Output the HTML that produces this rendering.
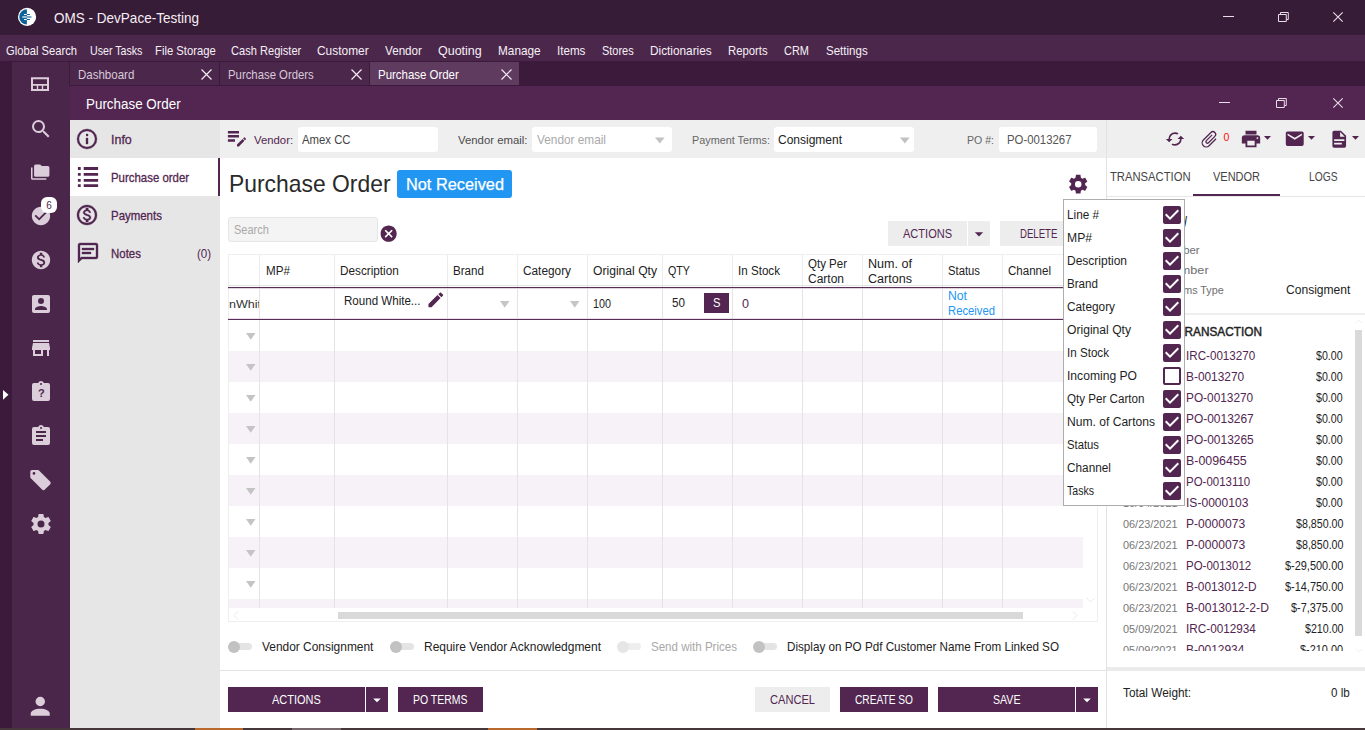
<!DOCTYPE html>
<html lang="en"><head><meta charset="utf-8"><title>OMS - DevPace-Testing</title><style>
*{box-sizing:border-box;margin:0;padding:0}
html,body{width:1365px;height:730px;overflow:hidden;background:#fff}
body{font-family:"Liberation Sans",sans-serif;font-size:13px;position:relative}
.b{position:absolute}
.i{position:absolute;display:block;overflow:visible}
.t{position:absolute;white-space:nowrap;display:block;transform-origin:0 50%}
.clip{position:absolute;overflow:hidden}
</style></head>
<body>
<div class="b" style="left:0px;top:0px;width:1365px;height:35px;background:#371c37;"></div>
<div class="b" style="left:0px;top:35px;width:1365px;height:26px;background:#4b274b;"></div>
<div class="b" style="left:0px;top:61px;width:1365px;height:25px;background:#3b1a3b;"></div>
<div class="b" style="left:0px;top:86px;width:12px;height:642px;background:#3b1a3b;"></div>
<div class="b" style="left:12px;top:62px;width:57px;height:24px;background:#4b264b;"></div>
<div class="b" style="left:12px;top:86px;width:58px;height:642px;background:#4b264b;"></div>
<svg class="i" style="left:17px;top:7px;width:20px;height:20px" viewBox="0 0 20 20"><circle cx="10.05" cy="9.9" r="9.1" fill="#fff"/><path d="M9.85,2.3A7.6,7.6 0 0,0 9.85,17.5Z" fill="#0b6399"/><path d="M6.97,6.9H9.85V7.95H6.97Z M6.97,12.05H9.85V13.1H6.97Z" fill="#fff"/><path d="M5.3,9.2H9.85V10.8H5.3Z" fill="#fff" opacity=".75"/><path d="M9.85,6.9H12.9V7.95H9.85Z M9.85,12.05H12.9V13.1H9.85Z" fill="#0b6399"/><path d="M9.85,9.2H14.4V10.8H9.85Z" fill="#0b6399" opacity=".7"/></svg>
<span class="t" style="left:54.2px;top:9px;font-size:14.5px;line-height:18px;color:#f4eef4;transform:scaleX(0.9323);">OMS - DevPace-Testing</span>
<div class="b" style="left:1223px;top:16.1px;width:10.5px;height:1.1px;background:#e8dde8;"></div><svg class="i" style="left:1278px;top:12px;width:11px;height:10px" viewBox="0 0 11 10"><path d="M0.5,2.5H8.3V9.5H0.5Z M2.5,2.5V0.5H10.3V7.5H8.3" fill="none" stroke="#e8dde8" stroke-width="1"/></svg><svg class="i" style="left:1333.4px;top:12px;width:10px;height:10px" viewBox="0 0 10 10"><path d="M0.3,0.3L9.7,9.7M9.7,0.3L0.3,9.7" fill="none" stroke="#e8dde8" stroke-width="1.1"/></svg>
<span class="t" style="left:6.3px;top:43px;font-size:12.7px;line-height:16px;color:#f6f0f6;transform:scaleX(0.883);">Global Search</span>
<span class="t" style="left:90.3px;top:43px;font-size:12.7px;line-height:16px;color:#f6f0f6;transform:scaleX(0.8382);">User Tasks</span>
<span class="t" style="left:155.3px;top:43px;font-size:12.7px;line-height:16px;color:#f6f0f6;transform:scaleX(0.8873);">File Storage</span>
<span class="t" style="left:230.7px;top:43px;font-size:12.7px;line-height:16px;color:#f6f0f6;transform:scaleX(0.8745);">Cash Register</span>
<span class="t" style="left:317.3px;top:43px;font-size:12.7px;line-height:16px;color:#f6f0f6;transform:scaleX(0.94);">Customer</span>
<span class="t" style="left:385px;top:43px;font-size:12.7px;line-height:16px;color:#f6f0f6;transform:scaleX(0.92);">Vendor</span>
<span class="t" style="left:438px;top:43px;font-size:12.7px;line-height:16px;color:#f6f0f6;transform:scaleX(0.9834);">Quoting</span>
<span class="t" style="left:498.3px;top:43px;font-size:12.7px;line-height:16px;color:#f6f0f6;transform:scaleX(0.9311);">Manage</span>
<span class="t" style="left:557.3px;top:43px;font-size:12.7px;line-height:16px;color:#f6f0f6;transform:scaleX(0.9152);">Items</span>
<span class="t" style="left:602px;top:43px;font-size:12.7px;line-height:16px;color:#f6f0f6;transform:scaleX(0.8644);">Stores</span>
<span class="t" style="left:650.3px;top:43px;font-size:12.7px;line-height:16px;color:#f6f0f6;transform:scaleX(0.9309);">Dictionaries</span>
<span class="t" style="left:728.3px;top:43px;font-size:12.7px;line-height:16px;color:#f6f0f6;transform:scaleX(0.8934);">Reports</span>
<span class="t" style="left:784.3px;top:43px;font-size:12.7px;line-height:16px;color:#f6f0f6;transform:scaleX(0.8649);">CRM</span>
<span class="t" style="left:826px;top:43px;font-size:12.7px;line-height:16px;color:#f6f0f6;transform:scaleX(0.9096);">Settings</span>
<div class="b" style="left:70px;top:62px;width:149px;height:23px;background:#4b274b;"></div><span class="t" style="left:78.2px;top:67px;font-size:12.7px;line-height:16px;color:#d9c9d9;transform:scaleX(0.9069);">Dashboard</span><svg class="i" style="left:201.4px;top:68.5px;width:11px;height:11px" viewBox="0 0 11 11"><path d="M0.5,0.5L10.5,10.5M10.5,0.5L0.5,10.5" fill="none" stroke="#f3ecf3" stroke-width="1.2"/></svg>
<div class="b" style="left:220px;top:62px;width:149px;height:23px;background:#4b274b;"></div><span class="t" style="left:228.2px;top:67px;font-size:12.7px;line-height:16px;color:#d9c9d9;transform:scaleX(0.8946);">Purchase Orders</span><svg class="i" style="left:351.4px;top:68.5px;width:11px;height:11px" viewBox="0 0 11 11"><path d="M0.5,0.5L10.5,10.5M10.5,0.5L0.5,10.5" fill="none" stroke="#f3ecf3" stroke-width="1.2"/></svg>
<div class="b" style="left:370px;top:62px;width:149px;height:23px;background:#5f3b5f;"></div><span class="t" style="left:378.2px;top:67px;font-size:12.7px;line-height:16px;color:#fff;transform:scaleX(0.9022);">Purchase Order</span><svg class="i" style="left:501.4px;top:68.5px;width:11px;height:11px" viewBox="0 0 11 11"><path d="M0.5,0.5L10.5,10.5M10.5,0.5L0.5,10.5" fill="none" stroke="#f3ecf3" stroke-width="1.2"/></svg>
<svg class="i" style="left:28.1px;top:72px;width:24px;height:24px" viewBox="0 0 24 24"><path fill="#dccdda" fill-rule="evenodd" d="M3,5.3H21V19H3Z M5,7.3V12H19V7.3Z M5,13.8V17H8.8V13.8Z M10.2,13.8V17H13.8V13.8Z M15.2,13.8V17H19V13.8Z"/></svg>
<svg class="i" style="left:28.6px;top:116.7px;width:24px;height:24px;" viewBox="0 0 24 24"><path fill="#dccdda" d="M9.5,3A6.5,6.5 0 0,1 16,9.5C16,11.11 15.41,12.59 14.44,13.73L14.71,14H15.5L20.5,19L19,20.5L14,15.5V14.71L13.73,14.44C12.59,15.41 11.11,16 9.5,16A6.5,6.5 0 0,1 3,9.5A6.5,6.5 0 0,1 9.5,3M9.5,5C7,5 5,7 5,9.5C5,12 7,14 9.5,14C12,14 14,12 14,9.5C14,7 12,5 9.5,5Z"/></svg>
<svg class="i" style="left:31.3px;top:163.4px;width:18.4px;height:18.4px;" viewBox="0 0 24 24"><path fill="#dccdda" d="M22,4H14L12,2H6A2,2 0 0,0 4,4V16A2,2 0 0,0 6,18H22A2,2 0 0,0 24,16V6A2,2 0 0,0 22,4M2,6H0V11H0V20A2,2 0 0,0 2,22H20V20H2V6Z"/></svg>
<svg class="i" style="left:29.6px;top:205.3px;width:22px;height:22px;" viewBox="0 0 24 24"><path fill="#dccdda" d="M12 2C6.5 2 2 6.5 2 12S6.5 22 12 22 22 17.5 22 12 17.5 2 12 2M10 17L5 12L6.41 10.59L10 14.17L17.59 6.58L19 8L10 17Z"/></svg>
<div class="b" style="left:41px;top:197px;width:16px;height:16px;background:#fff;border-radius:6px;"></div>
<span class="t" style="left:46.2px;top:200px;font-size:10px;line-height:12px;color:#4b264b;">6</span>
<svg class="i" style="left:29.8px;top:248.5px;width:22px;height:22px;" viewBox="0 0 24 24"><path fill="#dccdda" d="M12 2C6.48 2 2 6.48 2 12s4.48 10 10 10 10-4.48 10-10S17.52 2 12 2zm1.41 16.09V20h-2.67v-1.93c-1.71-.36-3.16-1.46-3.27-3.4h1.96c.1 1.05.82 1.87 2.65 1.87 1.96 0 2.4-.98 2.4-1.59 0-.83-.44-1.61-2.67-2.14-2.48-.6-4.18-1.62-4.18-3.67 0-1.72 1.39-2.84 3.11-3.21V4h2.67v1.95c1.86.45 2.79 1.86 2.85 3.39H14.3c-.05-1.11-.64-1.87-2.22-1.87-1.5 0-2.4.68-2.4 1.64 0 .84.65 1.39 2.67 1.91s4.18 1.39 4.18 3.91c-.01 1.83-1.38 2.83-3.12 3.16z"/></svg>
<svg class="i" style="left:28.6px;top:292px;width:24px;height:24px;" viewBox="0 0 24 24"><path fill="#dccdda" d="M6,17C6,15 10,13.9 12,13.9C14,13.9 18,15 18,17V18H6M15,9A3,3 0 0,1 12,12A3,3 0 0,1 9,9A3,3 0 0,1 12,6A3,3 0 0,1 15,9M3,5V19A2,2 0 0,0 5,21H19A2,2 0 0,0 21,19V5A2,2 0 0,0 19,3H5C3.89,3 3,3.9 3,5Z"/></svg>
<svg class="i" style="left:28.6px;top:336px;width:24px;height:24px;" viewBox="0 0 24 24"><path fill="#dccdda" d="M12,18H6V14H12M21,14V12L20,7H4L3,12V14H4V20H14V14H18V20H20V14M20,4H4V6H20V4Z"/></svg>
<svg class="i" style="left:28.6px;top:380px;width:24px;height:24px;" viewBox="0 0 24 24"><path fill="#dccdda" d="M19,3H14.82C14.4,1.84 13.3,1 12,1C10.7,1 9.6,1.84 9.18,3H5A2,2 0 0,0 3,5V19A2,2 0 0,0 5,21H19A2,2 0 0,0 21,19V5A2,2 0 0,0 19,3M12,3A1,1 0 0,1 13,4A1,1 0 0,1 12,5A1,1 0 0,1 11,4A1,1 0 0,1 12,3Z"/></svg>
<span class="t" style="left:37.9px;top:386px;font-size:11px;line-height:14px;color:#4b264b;font-weight:700;">?</span>
<svg class="i" style="left:28.6px;top:424px;width:24px;height:24px;" viewBox="0 0 24 24"><path fill="#dccdda" d="M17,9H7V7H17M17,13H7V11H17M14,17H7V15H14M12,3A1,1 0 0,1 13,4A1,1 0 0,1 12,5A1,1 0 0,1 11,4A1,1 0 0,1 12,3M19,3H14.82C14.4,1.84 13.3,1 12,1C10.7,1 9.6,1.84 9.18,3H5A2,2 0 0,0 3,5V19A2,2 0 0,0 5,21H19A2,2 0 0,0 21,19V5A2,2 0 0,0 19,3Z"/></svg>
<svg class="i" style="left:28px;top:468px;width:24px;height:24px" viewBox="0 0 24 24"><path fill="#dccdda" fill-rule="evenodd" d="M3.9,2.1H10Q10.6,2.1 11,2.5L22.3,13.7Q23.2,15 22.3,16.2L16.3,22Q15.3,22.6 14.3,21.8L2.8,10.2Q2.3,9.7 2.3,9V3.8Q2.3,2.1 3.9,2.1Z M7.35,5.42A1.38,1.38 0 1,0 4.59,5.42A1.38,1.38 0 1,0 7.35,5.42Z"/></svg>
<svg class="i" style="left:28.6px;top:512px;width:24px;height:24px;" viewBox="0 0 24 24"><path fill="#dccdda" d="M12,15.5A3.5,3.5 0 0,1 8.5,12A3.5,3.5 0 0,1 12,8.5A3.5,3.5 0 0,1 15.5,12A3.5,3.5 0 0,1 12,15.5M19.43,12.97C19.47,12.65 19.5,12.33 19.5,12C19.5,11.67 19.47,11.34 19.43,11L21.54,9.37C21.73,9.22 21.78,8.95 21.66,8.73L19.66,5.27C19.54,5.05 19.27,4.96 19.05,5.05L16.56,6.05C16.04,5.66 15.5,5.32 14.87,5.07L14.5,2.42C14.46,2.18 14.25,2 14,2H10C9.75,2 9.54,2.18 9.5,2.42L9.13,5.07C8.5,5.32 7.96,5.66 7.44,6.05L4.95,5.05C4.73,4.96 4.46,5.05 4.34,5.27L2.34,8.73C2.21,8.95 2.27,9.22 2.46,9.37L4.57,11C4.53,11.34 4.5,11.67 4.5,12C4.5,12.33 4.53,12.65 4.57,12.97L2.46,14.63C2.27,14.78 2.21,15.05 2.34,15.27L4.34,18.73C4.46,18.95 4.73,19.03 4.95,18.95L7.44,17.94C7.96,18.34 8.5,18.68 9.13,18.93L9.5,21.58C9.54,21.82 9.75,22 10,22H14C14.25,22 14.46,21.82 14.5,21.58L14.87,18.93C15.5,18.67 16.04,18.34 16.56,17.94L19.05,18.95C19.27,19.03 19.54,18.95 19.66,18.73L21.66,15.27C21.78,15.05 21.73,14.78 21.54,14.63L19.43,12.97Z"/></svg>
<svg class="i" style="left:26.25px;top:691.65px;width:28.5px;height:28.5px;" viewBox="0 0 24 24"><path fill="#dccdda" d="M12,4A4,4 0 0,1 16,8A4,4 0 0,1 12,12A4,4 0 0,1 8,8A4,4 0 0,1 12,4M12,14C16.42,14 20,15.79 20,18V20H4V18C4,15.79 7.58,14 12,14Z"/></svg>
<svg class="i" style="left:2.8px;top:389.7px;width:5.5px;height:9.7px" viewBox="0 0 6 11" preserveAspectRatio="none"><path d="M0,0L6,5.5L0,11Z" fill="#fff"/></svg>
<div class="b" style="left:70px;top:86px;width:1295px;height:34px;background:#522651;"></div>
<span class="t" style="left:86.4px;top:95px;font-size:14px;line-height:18px;color:#fff;transform:scaleX(0.9572);">Purchase Order</span>
<div class="b" style="left:1219px;top:102.1px;width:10.5px;height:1.1px;background:#e8dde8;"></div><svg class="i" style="left:1276px;top:98px;width:11px;height:10px" viewBox="0 0 11 10"><path d="M0.5,2.5H8.3V9.5H0.5Z M2.5,2.5V0.5H10.3V7.5H8.3" fill="none" stroke="#e8dde8" stroke-width="1"/></svg><svg class="i" style="left:1333.4px;top:98px;width:10px;height:10px" viewBox="0 0 10 10"><path d="M0.3,0.3L9.7,9.7M9.7,0.3L0.3,9.7" fill="none" stroke="#e8dde8" stroke-width="1.1"/></svg>
<div class="b" style="left:70px;top:120px;width:150px;height:608px;background:#e6e6e6;"></div>
<div class="b" style="left:70px;top:158px;width:150px;height:38px;background:#fff;"></div>
<div class="b" style="left:218px;top:158px;width:2px;height:38px;background:#522651;"></div>
<svg class="i" style="left:75.3px;top:126.8px;width:24px;height:24px;stroke:#522651;stroke-width:0.35px;" viewBox="0 0 24 24"><path fill="#522651" d="M11,9H13V7H11M12,20C7.59,20 4,16.41 4,12C4,7.59 7.59,4 12,4C16.41,4 20,7.59 20,12C20,16.41 16.41,20 12,20M12,2A10,10 0 0,0 2,12A10,10 0 0,0 12,22A10,10 0 0,0 22,12A10,10 0 0,0 12,2M11,17H13V11H11V17Z"/></svg>
<span class="t" style="left:110.8px;top:132px;font-size:12.6px;line-height:16px;color:#522651;transform:scaleX(0.9897);-webkit-text-stroke:0.3px #522651">Info</span>
<svg class="i" style="left:75.5px;top:165px;width:24px;height:24px" viewBox="0 0 24 24"><path fill="#522651" d="M1.9,2.1H4.7V5H1.9Z M7.7,2.1H22.1V5H7.7Z M1.9,8H4.7V10.8H1.9Z M7.7,8H22.1V10.8H7.7Z M1.9,13.9H4.7V16.7H1.9Z M7.7,13.9H22.1V16.7H7.7Z M1.9,19.3H4.7V22.1H1.9Z M7.7,19.3H22.1V22.1H7.7Z"/></svg>
<span class="t" style="left:110.8px;top:170px;font-size:12.6px;line-height:16px;color:#522651;transform:scaleX(0.907);-webkit-text-stroke:0.3px #522651">Purchase order</span>
<svg class="i" style="left:75.3px;top:202.5px;width:24px;height:24px;stroke:#522651;stroke-width:0.35px;" viewBox="0 0 24 24"><path fill="#522651" d="M12 2C6.48 2 2 6.48 2 12s4.48 10 10 10 10-4.48 10-10S17.52 2 12 2zm0 18c-4.41 0-8-3.59-8-8s3.59-8 8-8 8 3.59 8 8-3.59 8-8 8zm.31-8.86c-1.77-.45-2.34-.94-2.34-1.67 0-.84.79-1.43 2.1-1.43 1.38 0 1.9.66 1.94 1.64h1.71c-.05-1.34-.87-2.57-2.49-2.97V5H10.9v1.69c-1.51.32-2.72 1.3-2.72 2.81 0 1.79 1.49 2.69 3.66 3.21 1.95.46 2.34 1.15 2.34 1.87 0 .53-.39 1.39-2.1 1.39-1.6 0-2.23-.72-2.32-1.64H8.04c.1 1.7 1.36 2.66 2.86 2.97V19h2.34v-1.67c1.52-.29 2.72-1.16 2.73-2.77-.01-2.2-1.9-2.96-3.66-3.42z"/></svg>
<span class="t" style="left:110.8px;top:208px;font-size:12.6px;line-height:16px;color:#522651;transform:scaleX(0.9089);-webkit-text-stroke:0.3px #522651">Payments</span>
<svg class="i" style="left:75.5px;top:240.7px;width:24px;height:24px;stroke:#522651;stroke-width:0.35px;" viewBox="0 0 24 24"><path fill="#522651" d="M20,2A2,2 0 0,1 22,4V16A2,2 0 0,1 20,18H6L2,22V4C2,2.89 2.9,2 4,2H20M4,4V17.17L5.17,16H20V4H4M6,7H18V9H6V7M6,11H15V13H6V11Z"/></svg>
<span class="t" style="left:110.8px;top:246px;font-size:12.6px;line-height:16px;color:#522651;transform:scaleX(0.9086);-webkit-text-stroke:0.3px #522651">Notes</span>
<span class="t" style="left:197.4px;top:246px;font-size:12.6px;line-height:16px;color:#522651;transform:scaleX(0.9217);">(0)</span>
<div class="b" style="left:220px;top:120px;width:1145px;height:38px;background:#efefef;"></div>
<div class="b" style="left:1106px;top:120px;width:1px;height:608px;background:#e2e2e2;"></div>
<svg class="i" style="left:226px;top:129px;width:24px;height:24px" viewBox="0 0 24 24"><path fill="#522651" d="M1.9,2.1H13V4.5H1.9Z M1.9,6.1H13V8.5H1.9Z M1.9,10.3H9V12.7H1.9Z"/><path fill="#522651" transform="translate(-0.04,-1.02) scale(0.92)" d="M20.04,10.13C19.9,10.13 19.76,10.19 19.65,10.3L18.65,11.3L20.7,13.35L21.7,12.35C21.92,12.14 21.92,11.79 21.7,11.58L20.42,10.3C20.31,10.19 20.18,10.13 20.04,10.13M18.07,11.88L12,17.94V20H14.06L20.12,13.93L18.07,11.88"/></svg>
<span class="t" style="left:254.2px;top:132px;font-size:11.7px;line-height:15px;color:#522651;transform:scaleX(0.9703);">Vendor:</span>
<div class="b" style="left:298px;top:126.5px;width:140px;height:25px;background:#fff;border-radius:3px;"></div>
<span class="t" style="left:302px;top:132px;font-size:12.7px;line-height:16px;color:#444;transform:scaleX(0.8935);">Amex CC</span>
<span class="t" style="left:458px;top:132px;font-size:11.7px;line-height:15px;color:#4a4a4a;transform:scaleX(0.9725);">Vendor email:</span>
<div class="b" style="left:532px;top:126.5px;width:140px;height:25px;background:#fff;border-radius:3px;"></div>
<span class="t" style="left:537px;top:132px;font-size:12.7px;line-height:16px;color:#a9a9a9;transform:scaleX(0.9316);">Vendor email</span>
<svg class="i" style="left:654.6px;top:136.7px;width:9.6px;height:7px" viewBox="0 0 11 7"><path d="M0,0H11L5.5,7Z" fill="#c2c2c2"/></svg>
<span class="t" style="left:692px;top:132px;font-size:11.7px;line-height:15px;color:#666;transform:scaleX(0.926);">Payment Terms:</span>
<div class="b" style="left:774px;top:126.5px;width:140px;height:25px;background:#fff;border-radius:3px;"></div>
<span class="t" style="left:778px;top:132px;font-size:12.7px;line-height:16px;color:#222;transform:scaleX(0.9453);">Consigment</span>
<svg class="i" style="left:900.3px;top:136.7px;width:9.6px;height:7px" viewBox="0 0 11 7"><path d="M0,0H11L5.5,7Z" fill="#c2c2c2"/></svg>
<span class="t" style="left:966.5px;top:132px;font-size:11.7px;line-height:15px;color:#666;transform:scaleX(0.9033);">PO #:</span>
<div class="b" style="left:999px;top:126.5px;width:98px;height:25px;background:#fff;border-radius:3px;"></div>
<span class="t" style="left:1006.5px;top:132px;font-size:12.7px;line-height:16px;color:#555;transform:scaleX(0.8964);">PO-0013267</span>
<svg class="i" style="left:1164.9px;top:128.8px;width:20px;height:20px;" viewBox="0 0 24 24"><path fill="#522651" d="M19,8L15,12H18A6,6 0 0,1 12,18C11,18 10.03,17.75 9.2,17.3L7.74,18.76C8.97,19.54 10.43,20 12,20A8,8 0 0,0 20,12H23M6,12A6,6 0 0,1 12,6C13,6 13.97,6.25 14.8,6.7L16.26,5.24C15.03,4.46 13.57,4 12,4A8,8 0 0,0 4,12H1L5,16L9,12"/></svg>
<svg class="i" style="left:1198.75px;top:128.6px;width:20.5px;height:20.5px;transform:rotate(45deg)" viewBox="0 0 24 24"><path fill="#522651" d="M16.5,6V17.5A4,4 0 0,1 12.5,21.5A4,4 0 0,1 8.5,17.5V5A2.5,2.5 0 0,1 11,2.5A2.5,2.5 0 0,1 13.5,5V15.5A1,1 0 0,1 12.5,16.5A1,1 0 0,1 11.5,15.5V6H10V15.5A2.5,2.5 0 0,0 12.5,18A2.5,2.5 0 0,0 15,15.5V5A4,4 0 0,0 11,1A4,4 0 0,0 7,5V17.5A5.5,5.5 0 0,0 12.5,23A5.5,5.5 0 0,0 18,17.5V6H16.5Z"/></svg>
<span class="t" style="left:1223.5px;top:131px;font-size:10.5px;line-height:13px;color:#ff0d0d;">0</span>
<svg class="i" style="left:1239.9px;top:127.8px;width:22px;height:22px;" viewBox="0 0 24 24"><path fill="#522651" d="M18,3H6V7H18M19,12A1,1 0 0,1 18,11A1,1 0 0,1 19,10A1,1 0 0,1 20,11A1,1 0 0,1 19,12M16,19H8V14H16M19,8H5A3,3 0 0,0 2,11V17H6V21H18V17H22V11A3,3 0 0,0 19,8Z"/></svg>
<svg class="i" style="left:1259.4px;top:129.45px;width:17px;height:17px;" viewBox="0 0 24 24"><path fill="#522651" d="M7,10L12,15L17,10H7Z"/></svg>
<svg class="i" style="left:1284.15px;top:128.35px;width:21.5px;height:21.5px;" viewBox="0 0 24 24"><path fill="#522651" d="M20,8L12,13L4,8V6L12,11L20,6M20,4H4C2.89,4 2,4.89 2,6V18A2,2 0 0,0 4,20H20A2,2 0 0,0 22,18V6C22,4.89 21.1,4 20,4Z"/></svg>
<svg class="i" style="left:1303.4px;top:129.45px;width:17px;height:17px;" viewBox="0 0 24 24"><path fill="#522651" d="M7,10L12,15L17,10H7Z"/></svg>
<svg class="i" style="left:1328.95px;top:129px;width:20.5px;height:20.5px;" viewBox="0 0 24 24"><path fill="#522651" d="M13,9H18.5L13,3.5V9M6,2H14L20,8V20A2,2 0 0,1 18,22H6C4.89,22 4,21.1 4,20V4C4,2.89 4.89,2 6,2M15,18V16H6V18H15M18,14V12H6V14H18Z"/></svg>
<svg class="i" style="left:1347.3px;top:129.45px;width:17px;height:17px;" viewBox="0 0 24 24"><path fill="#522651" d="M7,10L12,15L17,10H7Z"/></svg>
<span class="t" style="left:228.8px;top:170px;font-size:23.2px;line-height:29px;color:#2a2a2a;transform:scaleX(0.9867);">Purchase Order</span>
<div class="b" style="left:397px;top:169.5px;width:114.8px;height:28px;background:#2196f3;border-radius:3px;"></div>
<span class="t" style="left:405.7px;top:175px;font-size:15.8px;line-height:20px;color:#fff;transform:scaleX(1.0334);-webkit-text-stroke:0.25px #fff">Not Received</span>
<svg class="i" style="left:1066.9px;top:172.7px;width:22.4px;height:22.4px;" viewBox="0 0 24 24"><path fill="#522651" d="M12,15.5A3.5,3.5 0 0,1 8.5,12A3.5,3.5 0 0,1 12,8.5A3.5,3.5 0 0,1 15.5,12A3.5,3.5 0 0,1 12,15.5M19.43,12.97C19.47,12.65 19.5,12.33 19.5,12C19.5,11.67 19.47,11.34 19.43,11L21.54,9.37C21.73,9.22 21.78,8.95 21.66,8.73L19.66,5.27C19.54,5.05 19.27,4.96 19.05,5.05L16.56,6.05C16.04,5.66 15.5,5.32 14.87,5.07L14.5,2.42C14.46,2.18 14.25,2 14,2H10C9.75,2 9.54,2.18 9.5,2.42L9.13,5.07C8.5,5.32 7.96,5.66 7.44,6.05L4.95,5.05C4.73,4.96 4.46,5.05 4.34,5.27L2.34,8.73C2.21,8.95 2.27,9.22 2.46,9.37L4.57,11C4.53,11.34 4.5,11.67 4.5,12C4.5,12.33 4.53,12.65 4.57,12.97L2.46,14.63C2.27,14.78 2.21,15.05 2.34,15.27L4.34,18.73C4.46,18.95 4.73,19.03 4.95,18.95L7.44,17.94C7.96,18.34 8.5,18.68 9.13,18.93L9.5,21.58C9.54,21.82 9.75,22 10,22H14C14.25,22 14.46,21.82 14.5,21.58L14.87,18.93C15.5,18.67 16.04,18.34 16.56,17.94L19.05,18.95C19.27,19.03 19.54,18.95 19.66,18.73L21.66,15.27C21.78,15.05 21.73,14.78 21.54,14.63L19.43,12.97Z"/></svg>
<div class="b" style="left:228px;top:217px;width:150px;height:25px;background:#f4f4f4;border:1px solid #e6e6e6;border-radius:3px;"></div>
<span class="t" style="left:234.2px;top:223px;font-size:12.3px;line-height:15px;color:#a9a9a9;transform:scaleX(0.893);">Search</span>
<svg class="i" style="left:379.4px;top:224px;width:19.3px;height:19.3px;" viewBox="0 0 24 24"><path fill="#522651" d="M12,2C17.53,2 22,6.47 22,12C22,17.53 17.53,22 12,22C6.47,22 2,17.53 2,12C2,6.47 6.47,2 12,2M15.59,7L12,10.59L8.41,7L7,8.41L10.59,12L7,15.59L8.41,17L12,13.41L15.59,17L17,15.59L13.41,12L17,8.41L15.59,7Z"/></svg>
<div class="b" style="left:888px;top:221px;width:79px;height:25px;background:#ededed;"></div>
<span class="t" style="left:903px;top:227px;font-size:12px;line-height:15px;color:#522651;transform:scaleX(0.9204);">ACTIONS</span>
<div class="b" style="left:968px;top:221px;width:22px;height:25px;background:#ededed;"></div>
<svg class="i" style="left:969px;top:223.5px;width:20px;height:20px;" viewBox="0 0 24 24"><path fill="#522651" d="M7,10L12,15L17,10H7Z"/></svg>
<div class="b" style="left:1000px;top:221px;width:80px;height:25px;background:#ededed;"></div>
<span class="t" style="left:1019.6px;top:227px;font-size:12px;line-height:15px;color:#522651;transform:scaleX(0.8011);">DELETE</span>
<div class="b" style="left:228px;top:254px;width:870px;height:368px;background:#fff;border:1px solid #eeeeee;"></div>
<div class="clip" style="left:229px;top:255px;width:854px;height:353px">
<div class="b" style="left:0px;top:96px;width:854px;height:31px;background:#f7f2f7;"></div>
<div class="b" style="left:0px;top:158px;width:854px;height:31px;background:#f7f2f7;"></div>
<div class="b" style="left:0px;top:220px;width:854px;height:31px;background:#f7f2f7;"></div>
<div class="b" style="left:0px;top:282px;width:854px;height:31px;background:#f7f2f7;"></div>
<div class="b" style="left:0px;top:344px;width:854px;height:31px;background:#f7f2f7;"></div>
<div class="b" style="left:30px;top:0px;width:1px;height:353px;background:#e6e2e6;"></div>
<div class="b" style="left:105px;top:0px;width:1px;height:353px;background:#e6e2e6;"></div>
<div class="b" style="left:218px;top:0px;width:1px;height:353px;background:#e6e2e6;"></div>
<div class="b" style="left:288px;top:0px;width:1px;height:353px;background:#e6e2e6;"></div>
<div class="b" style="left:358px;top:0px;width:1px;height:353px;background:#e6e2e6;"></div>
<div class="b" style="left:433px;top:0px;width:1px;height:353px;background:#e6e2e6;"></div>
<div class="b" style="left:503px;top:0px;width:1px;height:353px;background:#e6e2e6;"></div>
<div class="b" style="left:573px;top:0px;width:1px;height:353px;background:#e6e2e6;"></div>
<div class="b" style="left:633px;top:0px;width:1px;height:353px;background:#e6e2e6;"></div>
<div class="b" style="left:713px;top:0px;width:1px;height:353px;background:#e6e2e6;"></div>
<div class="b" style="left:773px;top:0px;width:1px;height:353px;background:#e6e2e6;"></div>
</div>
<div class="b" style="left:229px;top:255px;width:854px;height:30px;background:#fff;"></div>
<div class="b" style="left:259px;top:255px;width:1px;height:31px;background:#ececec;"></div>
<div class="b" style="left:334px;top:255px;width:1px;height:31px;background:#ececec;"></div>
<div class="b" style="left:447px;top:255px;width:1px;height:31px;background:#ececec;"></div>
<div class="b" style="left:517px;top:255px;width:1px;height:31px;background:#ececec;"></div>
<div class="b" style="left:587px;top:255px;width:1px;height:31px;background:#ececec;"></div>
<div class="b" style="left:662px;top:255px;width:1px;height:31px;background:#ececec;"></div>
<div class="b" style="left:732px;top:255px;width:1px;height:31px;background:#ececec;"></div>
<div class="b" style="left:802px;top:255px;width:1px;height:31px;background:#ececec;"></div>
<div class="b" style="left:862px;top:255px;width:1px;height:31px;background:#ececec;"></div>
<div class="b" style="left:942px;top:255px;width:1px;height:31px;background:#ececec;"></div>
<div class="b" style="left:1002px;top:255px;width:1px;height:31px;background:#ececec;"></div>
<div class="b" style="left:229px;top:285px;width:854px;height:1px;background:#e4e4e4;"></div>
<div class="b" style="left:229px;top:288px;width:854px;height:31px;background:#fff;"></div>
<div class="b" style="left:228px;top:287px;width:855px;height:1px;background:#5a2d59;"></div>
<div class="b" style="left:228px;top:288px;width:855px;height:1px;background:#5a2d59;opacity:.2;"></div>
<div class="b" style="left:228px;top:319px;width:855px;height:1px;background:#5a2d59;"></div>
<div class="b" style="left:228px;top:318px;width:855px;height:1px;background:#5a2d59;opacity:.15;"></div>
<div class="b" style="left:259px;top:289px;width:1px;height:29px;background:#e6e2e6;"></div>
<div class="b" style="left:334px;top:289px;width:1px;height:29px;background:#e6e2e6;"></div>
<div class="b" style="left:447px;top:289px;width:1px;height:29px;background:#e6e2e6;"></div>
<div class="b" style="left:517px;top:289px;width:1px;height:29px;background:#e6e2e6;"></div>
<div class="b" style="left:587px;top:289px;width:1px;height:29px;background:#e6e2e6;"></div>
<div class="b" style="left:662px;top:289px;width:1px;height:29px;background:#e6e2e6;"></div>
<div class="b" style="left:732px;top:289px;width:1px;height:29px;background:#e6e2e6;"></div>
<div class="b" style="left:802px;top:289px;width:1px;height:29px;background:#e6e2e6;"></div>
<div class="b" style="left:862px;top:289px;width:1px;height:29px;background:#e6e2e6;"></div>
<div class="b" style="left:942px;top:289px;width:1px;height:29px;background:#e6e2e6;"></div>
<div class="b" style="left:1002px;top:289px;width:1px;height:29px;background:#e6e2e6;"></div>
<span class="t" style="left:265.8px;top:264px;font-size:12px;line-height:15px;color:#222;transform:scaleX(0.9681);">MP#</span>
<span class="t" style="left:340.2px;top:264px;font-size:12px;line-height:15px;color:#222;transform:scaleX(0.9795);">Description</span>
<span class="t" style="left:453px;top:264px;font-size:12px;line-height:15px;color:#222;transform:scaleX(0.9678);">Brand</span>
<span class="t" style="left:523px;top:264px;font-size:12px;line-height:15px;color:#222;transform:scaleX(0.9856);">Category</span>
<span class="t" style="left:593px;top:264px;font-size:12px;line-height:15px;color:#222;transform:scaleX(1.0101);">Original Qty</span>
<span class="t" style="left:668px;top:264px;font-size:12px;line-height:15px;color:#222;transform:scaleX(0.8917);">QTY</span>
<span class="t" style="left:738px;top:264px;font-size:12px;line-height:15px;color:#222;transform:scaleX(0.9686);">In Stock</span>
<span class="t" style="left:808px;top:257px;font-size:12px;line-height:15px;color:#222;transform:scaleX(0.9585);">Qty Per</span>
<span class="t" style="left:808px;top:272px;font-size:12px;line-height:15px;color:#222;">Carton</span>
<span class="t" style="left:868px;top:257px;font-size:12px;line-height:15px;color:#222;transform:scaleX(1.0472);">Num. of</span>
<span class="t" style="left:868px;top:272px;font-size:12px;line-height:15px;color:#222;transform:scaleX(1.0468);">Cartons</span>
<span class="t" style="left:948px;top:264px;font-size:12px;line-height:15px;color:#222;transform:scaleX(0.9403);">Status</span>
<span class="t" style="left:1008px;top:264px;font-size:12px;line-height:15px;color:#222;transform:scaleX(0.9619);">Channel</span>
<div class="clip" style="left:229px;top:289px;width:30px;height:29px">
<span class="t" style="left:0.4px;top:8px;font-size:11px;line-height:14px;color:#333;transform:scaleX(1.1413);">nWhit</span>
</div>
<span class="t" style="left:343.7px;top:294px;font-size:12.2px;line-height:15px;color:#222;transform:scaleX(0.9488);">Round White...</span>
<svg class="i" style="left:425.6px;top:290px;width:19.6px;height:19.6px;" viewBox="0 0 24 24"><path fill="#522651" d="M20.71,7.04C21.1,6.65 21.1,6 20.71,5.63L18.37,3.29C18,2.9 17.35,2.9 16.96,3.29L15.12,5.12L18.87,8.87M3,17.25V21H6.75L17.81,9.93L14.06,6.18L3,17.25Z"/></svg>
<svg class="i" style="left:499.9px;top:300.9px;width:9.5px;height:6.8px" viewBox="0 0 10 7" preserveAspectRatio="none"><path d="M0,0H10L5,7Z" fill="#c6c6c6"/></svg>
<svg class="i" style="left:569.9px;top:300.9px;width:9.5px;height:6.8px" viewBox="0 0 10 7" preserveAspectRatio="none"><path d="M0,0H10L5,7Z" fill="#c6c6c6"/></svg>
<span class="t" style="left:593px;top:297px;font-size:12px;line-height:15px;color:#222;transform:scaleX(0.8986);">100</span>
<span class="t" style="left:672px;top:296px;font-size:12px;line-height:15px;color:#222;transform:scaleX(0.9731);">50</span>
<div class="b" style="left:704px;top:293px;width:24.5px;height:20px;background:#522651;"></div>
<span class="t" style="left:712.5px;top:296px;font-size:12.2px;line-height:15px;color:#fff;transform:scaleX(0.9213);">S</span>
<span class="t" style="left:742px;top:297px;font-size:12px;line-height:15px;color:#522651;transform:scaleX(1.0467);">0</span>
<span class="t" style="left:948px;top:289px;font-size:12px;line-height:15px;color:#2196f3;transform:scaleX(1.0167);">Not</span>
<span class="t" style="left:948px;top:304px;font-size:12px;line-height:15px;color:#2196f3;transform:scaleX(0.9394);">Received</span>
<svg class="i" style="left:245.7px;top:332.9px;width:9.5px;height:6.8px" viewBox="0 0 10 7" preserveAspectRatio="none"><path d="M0,0H10L5,7Z" fill="#c4c4c4"/></svg>
<svg class="i" style="left:245.7px;top:363.9px;width:9.5px;height:6.8px" viewBox="0 0 10 7" preserveAspectRatio="none"><path d="M0,0H10L5,7Z" fill="#c4c4c4"/></svg>
<svg class="i" style="left:245.7px;top:394.9px;width:9.5px;height:6.8px" viewBox="0 0 10 7" preserveAspectRatio="none"><path d="M0,0H10L5,7Z" fill="#c4c4c4"/></svg>
<svg class="i" style="left:245.7px;top:425.9px;width:9.5px;height:6.8px" viewBox="0 0 10 7" preserveAspectRatio="none"><path d="M0,0H10L5,7Z" fill="#c4c4c4"/></svg>
<svg class="i" style="left:245.7px;top:456.9px;width:9.5px;height:6.8px" viewBox="0 0 10 7" preserveAspectRatio="none"><path d="M0,0H10L5,7Z" fill="#c4c4c4"/></svg>
<svg class="i" style="left:245.7px;top:487.9px;width:9.5px;height:6.8px" viewBox="0 0 10 7" preserveAspectRatio="none"><path d="M0,0H10L5,7Z" fill="#c4c4c4"/></svg>
<svg class="i" style="left:245.7px;top:518.9px;width:9.5px;height:6.8px" viewBox="0 0 10 7" preserveAspectRatio="none"><path d="M0,0H10L5,7Z" fill="#c4c4c4"/></svg>
<svg class="i" style="left:245.7px;top:549.9px;width:9.5px;height:6.8px" viewBox="0 0 10 7" preserveAspectRatio="none"><path d="M0,0H10L5,7Z" fill="#c4c4c4"/></svg>
<svg class="i" style="left:245.7px;top:580.9px;width:9.5px;height:6.8px" viewBox="0 0 10 7" preserveAspectRatio="none"><path d="M0,0H10L5,7Z" fill="#c4c4c4"/></svg>
<div class="b" style="left:338px;top:611.5px;width:685px;height:7px;background:#d9d9d9;"></div>
<svg class="i" style="left:233px;top:611px;width:6px;height:9px" viewBox="0 0 6 9"><path d="M5,0.5L1,4.5L5,8.5" fill="none" stroke="#e9e9e9" stroke-width="1"/></svg>
<svg class="i" style="left:1072px;top:611px;width:6px;height:9px" viewBox="0 0 6 9"><path d="M1,0.5L5,4.5L1,8.5" fill="none" stroke="#e9e9e9" stroke-width="1"/></svg>
<svg class="i" style="left:1086px;top:597px;width:9px;height:6px" viewBox="0 0 9 6"><path d="M0.5,1L4.5,5L8.5,1" fill="none" stroke="#e9e9e9" stroke-width="1"/></svg>
<div class="b" style="left:231px;top:643.2px;width:20.8px;height:7.3px;background:#e4e4e4;border-radius:4px;"></div><div class="b" style="left:228.3px;top:641px;width:11.7px;height:11.7px;background:#c2c2c2;border-radius:6px;"></div>
<span class="t" style="left:262.4px;top:639px;font-size:13px;line-height:16px;color:#222;transform:scaleX(0.9175);">Vendor Consignment</span>
<div class="b" style="left:393px;top:643.2px;width:20.8px;height:7.3px;background:#e4e4e4;border-radius:4px;"></div><div class="b" style="left:390.3px;top:641px;width:11.7px;height:11.7px;background:#c2c2c2;border-radius:6px;"></div>
<span class="t" style="left:424px;top:639px;font-size:13px;line-height:16px;color:#222;transform:scaleX(0.9208);">Require Vendor Acknowledgment</span>
<div class="b" style="left:620px;top:643.2px;width:20.8px;height:7.3px;background:#eeeeee;border-radius:4px;"></div><div class="b" style="left:617.3px;top:641px;width:11.7px;height:11.7px;background:#e6e6e6;border-radius:6px;"></div>
<span class="t" style="left:651px;top:639px;font-size:13px;line-height:16px;color:#a8a8a8;transform:scaleX(0.8882);">Send with Prices</span>
<div class="b" style="left:756px;top:643.2px;width:20.8px;height:7.3px;background:#e4e4e4;border-radius:4px;"></div><div class="b" style="left:753.3px;top:641px;width:11.7px;height:11.7px;background:#c2c2c2;border-radius:6px;"></div>
<span class="t" style="left:787px;top:639px;font-size:13px;line-height:16px;color:#222;transform:scaleX(0.8985);">Display on PO Pdf Customer Name From Linked SO</span>
<div class="b" style="left:220px;top:670px;width:886px;height:1px;background:#e2e2e2;"></div>
<div class="b" style="left:228.2px;top:687px;width:136.5px;height:24.8px;background:#522651;"></div>
<span class="t" style="left:272.3px;top:693px;font-size:12px;line-height:15px;color:#fff;transform:scaleX(0.9129);">ACTIONS</span>
<div class="b" style="left:366.3px;top:687px;width:21.6px;height:25px;background:#522651;"></div>
<svg class="i" style="left:368.2px;top:690.7px;width:18px;height:18px;" viewBox="0 0 24 24"><path fill="#fff" d="M7,10L12,15L17,10H7Z"/></svg>
<div class="b" style="left:398px;top:687px;width:85px;height:25px;background:#522651;"></div>
<span class="t" style="left:413.4px;top:693px;font-size:12px;line-height:15px;color:#fff;transform:scaleX(0.8724);">PO TERMS</span>
<div class="b" style="left:755px;top:687px;width:75px;height:25px;background:#ededed;"></div>
<span class="t" style="left:770px;top:693px;font-size:12px;line-height:15px;color:#522651;transform:scaleX(0.9243);">CANCEL</span>
<div class="b" style="left:840px;top:687px;width:88px;height:25px;background:#522651;"></div>
<span class="t" style="left:855px;top:693px;font-size:12px;line-height:15px;color:#fff;transform:scaleX(0.8471);">CREATE SO</span>
<div class="b" style="left:938px;top:687px;width:137px;height:25px;background:#522651;"></div>
<span class="t" style="left:993px;top:693px;font-size:12px;line-height:15px;color:#fff;transform:scaleX(0.8835);">SAVE</span>
<div class="b" style="left:1076.2px;top:687px;width:21.6px;height:24.8px;background:#522651;"></div>
<svg class="i" style="left:1078.2px;top:690.7px;width:18px;height:18px;" viewBox="0 0 24 24"><path fill="#fff" d="M7,10L12,15L17,10H7Z"/></svg>
<span class="t" style="left:1109.5px;top:169px;font-size:13px;line-height:16px;color:#444;transform:scaleX(0.864);">TRANSACTION</span>
<span class="t" style="left:1213px;top:169px;font-size:13px;line-height:16px;color:#444;transform:scaleX(0.8449);">VENDOR</span>
<span class="t" style="left:1308.5px;top:169px;font-size:13px;line-height:16px;color:#444;transform:scaleX(0.7889);">LOGS</span>
<div class="b" style="left:1107px;top:196px;width:258px;height:1px;background:#e6e6e6;"></div>
<div class="b" style="left:1193.3px;top:194px;width:86.6px;height:2px;background:#522651;"></div>
<span class="t" style="left:1123px;top:209px;font-size:15px;line-height:19px;color:#222;font-weight:700;transform:scaleX(0.4612);">Amex CC Company</span>
<span class="t" style="left:1123px;top:243px;font-size:11.5px;line-height:14px;color:#6e6e6e;transform:scaleX(0.9902);">Phone Number</span>
<span class="t" style="left:1123px;top:263px;font-size:11.5px;line-height:14px;color:#6e6e6e;transform:scaleX(1.0977);">Mobile Number</span>
<span class="t" style="left:1123px;top:283px;font-size:11.5px;line-height:14px;color:#6e6e6e;transform:scaleX(0.9359);">Payment Terms Type</span>
<span class="t" style="left:1285.6px;top:282px;font-size:12.5px;line-height:16px;color:#222;transform:scaleX(0.9655);">Consigment</span>
<div class="b" style="left:1107px;top:313px;width:258px;height:2px;background:#eeeeee;"></div>
<span class="t" style="left:1144.5px;top:324px;font-size:12.5px;line-height:16px;color:#222;transform:scaleX(0.9437);-webkit-text-stroke:0.45px #222;">LAST TRANSACTION</span>
<div class="clip" style="left:1107px;top:315px;width:247px;height:336px">
<span class="t" style="left:16.09999999999991px;top:34px;font-size:11.5px;line-height:14px;color:#777;transform:scaleX(0.9468);">10/04/2021</span>
<span class="t" style="left:78.79999999999995px;top:34px;font-size:12.2px;line-height:15px;color:#522651;transform:scaleX(0.9545);">IRC-0013270</span>
<span class="t" style="left:209.4000000000001px;top:34px;font-size:12px;line-height:15px;color:#222;transform:scaleX(0.8857);">$0.00</span>
<span class="t" style="left:16.09999999999991px;top:55px;font-size:11.5px;line-height:14px;color:#777;transform:scaleX(0.9468);">10/04/2021</span>
<span class="t" style="left:78.79999999999995px;top:55px;font-size:12.2px;line-height:15px;color:#522651;transform:scaleX(0.9758);">B-0013270</span>
<span class="t" style="left:209.4000000000001px;top:55px;font-size:12px;line-height:15px;color:#222;transform:scaleX(0.8857);">$0.00</span>
<span class="t" style="left:16.09999999999991px;top:76px;font-size:11.5px;line-height:14px;color:#777;transform:scaleX(0.9468);">10/04/2021</span>
<span class="t" style="left:78.79999999999995px;top:76px;font-size:12.2px;line-height:15px;color:#522651;transform:scaleX(0.9722);">PO-0013270</span>
<span class="t" style="left:209.4000000000001px;top:76px;font-size:12px;line-height:15px;color:#222;transform:scaleX(0.8857);">$0.00</span>
<span class="t" style="left:16.09999999999991px;top:97px;font-size:11.5px;line-height:14px;color:#777;transform:scaleX(0.9468);">10/04/2021</span>
<span class="t" style="left:78.79999999999995px;top:97px;font-size:12.2px;line-height:15px;color:#522651;transform:scaleX(0.9794);">PO-0013267</span>
<span class="t" style="left:209.4000000000001px;top:97px;font-size:12px;line-height:15px;color:#222;transform:scaleX(0.8857);">$0.00</span>
<span class="t" style="left:16.09999999999991px;top:118px;font-size:11.5px;line-height:14px;color:#777;transform:scaleX(0.9468);">10/04/2021</span>
<span class="t" style="left:78.79999999999995px;top:118px;font-size:12.2px;line-height:15px;color:#522651;transform:scaleX(0.9794);">PO-0013265</span>
<span class="t" style="left:209.4000000000001px;top:118px;font-size:12px;line-height:15px;color:#222;transform:scaleX(0.8857);">$0.00</span>
<span class="t" style="left:16.09999999999991px;top:139px;font-size:11.5px;line-height:14px;color:#777;transform:scaleX(0.9468);">10/04/2021</span>
<span class="t" style="left:78.79999999999995px;top:139px;font-size:12.2px;line-height:15px;color:#522651;transform:scaleX(1.0178);">B-0096455</span>
<span class="t" style="left:209.4000000000001px;top:139px;font-size:12px;line-height:15px;color:#222;transform:scaleX(0.8857);">$0.00</span>
<span class="t" style="left:16.09999999999991px;top:160px;font-size:11.5px;line-height:14px;color:#777;transform:scaleX(0.9468);">10/04/2021</span>
<span class="t" style="left:78.79999999999995px;top:160px;font-size:12.2px;line-height:15px;color:#522651;transform:scaleX(0.9411);">PO-0013110</span>
<span class="t" style="left:209.4000000000001px;top:160px;font-size:12px;line-height:15px;color:#222;transform:scaleX(0.8857);">$0.00</span>
<span class="t" style="left:16.09999999999991px;top:181px;font-size:11.5px;line-height:14px;color:#777;transform:scaleX(0.9468);">10/04/2021</span>
<span class="t" style="left:78.79999999999995px;top:181px;font-size:12.2px;line-height:15px;color:#522651;transform:scaleX(0.99);">IS-0000103</span>
<span class="t" style="left:209.4000000000001px;top:181px;font-size:12px;line-height:15px;color:#222;transform:scaleX(0.8857);">$0.00</span>
<span class="t" style="left:16.09999999999991px;top:202px;font-size:11.5px;line-height:14px;color:#777;transform:scaleX(0.9468);">06/23/2021</span>
<span class="t" style="left:78.79999999999995px;top:202px;font-size:12.2px;line-height:15px;color:#522651;transform:scaleX(0.9909);">P-0000073</span>
<span class="t" style="left:188.5px;top:202px;font-size:12px;line-height:15px;color:#222;transform:scaleX(0.8897);">$8,850.00</span>
<span class="t" style="left:16.09999999999991px;top:223px;font-size:11.5px;line-height:14px;color:#777;transform:scaleX(0.9468);">06/23/2021</span>
<span class="t" style="left:78.79999999999995px;top:223px;font-size:12.2px;line-height:15px;color:#522651;transform:scaleX(0.9909);">P-0000073</span>
<span class="t" style="left:188.5px;top:223px;font-size:12px;line-height:15px;color:#222;transform:scaleX(0.8897);">$8,850.00</span>
<span class="t" style="left:16.09999999999991px;top:244px;font-size:11.5px;line-height:14px;color:#777;transform:scaleX(0.9468);">06/23/2021</span>
<span class="t" style="left:78.79999999999995px;top:244px;font-size:12.2px;line-height:15px;color:#522651;transform:scaleX(0.9432);">PO-0013012</span>
<span class="t" style="left:177.70000000000005px;top:244px;font-size:12px;line-height:15px;color:#222;transform:scaleX(0.91);">$-29,500.00</span>
<span class="t" style="left:16.09999999999991px;top:265px;font-size:11.5px;line-height:14px;color:#777;transform:scaleX(0.9468);">06/23/2021</span>
<span class="t" style="left:78.79999999999995px;top:265px;font-size:12.2px;line-height:15px;color:#522651;transform:scaleX(0.9724);">B-0013012-D</span>
<span class="t" style="left:177.70000000000005px;top:265px;font-size:12px;line-height:15px;color:#222;transform:scaleX(0.91);">$-14,750.00</span>
<span class="t" style="left:16.09999999999991px;top:286px;font-size:11.5px;line-height:14px;color:#777;transform:scaleX(0.9468);">06/23/2021</span>
<span class="t" style="left:78.79999999999995px;top:286px;font-size:12.2px;line-height:15px;color:#522651;transform:scaleX(0.9947);">B-0013012-2-D</span>
<span class="t" style="left:184px;top:286px;font-size:12px;line-height:15px;color:#222;transform:scaleX(0.9061);">$-7,375.00</span>
<span class="t" style="left:16.09999999999991px;top:307px;font-size:11.5px;line-height:14px;color:#777;transform:scaleX(0.9468);">05/09/2021</span>
<span class="t" style="left:78.79999999999995px;top:307px;font-size:12.2px;line-height:15px;color:#522651;transform:scaleX(0.9641);">IRC-0012934</span>
<span class="t" style="left:197.5px;top:307px;font-size:12px;line-height:15px;color:#222;transform:scaleX(0.8873);">$210.00</span>
<span class="t" style="left:16.09999999999991px;top:328px;font-size:11.5px;line-height:14px;color:#777;transform:scaleX(0.9468);">05/09/2021</span>
<span class="t" style="left:78.79999999999995px;top:328px;font-size:12.2px;line-height:15px;color:#522651;transform:scaleX(0.9792);">B-0012934</span>
<span class="t" style="left:193px;top:328px;font-size:12px;line-height:15px;color:#222;transform:scaleX(0.9077);">$-210.00</span>
</div>
<div class="b" style="left:1355.3px;top:329.5px;width:6.5px;height:306px;background:#d9d9d9;"></div>
<svg class="i" style="left:1355px;top:319px;width:8px;height:5px" viewBox="0 0 9 6"><path d="M0.5,5L4.5,1L8.5,5" fill="none" stroke="#ececec" stroke-width="1"/></svg>
<svg class="i" style="left:1355px;top:648px;width:8px;height:5px" viewBox="0 0 9 6"><path d="M0.5,1L4.5,5L8.5,1" fill="none" stroke="#ececec" stroke-width="1"/></svg>
<div class="b" style="left:1107px;top:667px;width:258px;height:3.5px;background:#ebebeb;"></div>
<span class="t" style="left:1123.4px;top:685px;font-size:12.5px;line-height:16px;color:#222;transform:scaleX(0.9454);">Total Weight:</span>
<span class="t" style="left:1331px;top:685px;font-size:12.5px;line-height:16px;color:#222;transform:scaleX(0.9278);">0 lb</span>
<div class="b" style="left:1063px;top:199px;width:122px;height:307px;background:#fff;border:1px solid #adadad;"></div>
<span class="t" style="left:1067px;top:207px;font-size:12.5px;line-height:16px;color:#1e1e1e;transform:scaleX(0.9394);">Line #</span>
<svg class="i" style="left:1160.1px;top:203.1px;width:24px;height:24px;" viewBox="0 0 24 24"><path fill="#522651" d="M10,17L5,12L6.41,10.58L10,14.17L17.59,6.58L19,8M19,3H5C3.89,3 3,3.89 3,5V19A2,2 0 0,0 5,21H19A2,2 0 0,0 21,19V5C21,3.89 20.1,3 19,3Z"/></svg>
<span class="t" style="left:1067px;top:230px;font-size:12.5px;line-height:16px;color:#1e1e1e;transform:scaleX(0.9726);">MP#</span>
<svg class="i" style="left:1160.1px;top:226.1px;width:24px;height:24px;" viewBox="0 0 24 24"><path fill="#522651" d="M10,17L5,12L6.41,10.58L10,14.17L17.59,6.58L19,8M19,3H5C3.89,3 3,3.89 3,5V19A2,2 0 0,0 5,21H19A2,2 0 0,0 21,19V5C21,3.89 20.1,3 19,3Z"/></svg>
<span class="t" style="left:1067px;top:253px;font-size:12.5px;line-height:16px;color:#1e1e1e;transform:scaleX(0.9595);">Description</span>
<svg class="i" style="left:1160.1px;top:249.1px;width:24px;height:24px;" viewBox="0 0 24 24"><path fill="#522651" d="M10,17L5,12L6.41,10.58L10,14.17L17.59,6.58L19,8M19,3H5C3.89,3 3,3.89 3,5V19A2,2 0 0,0 5,21H19A2,2 0 0,0 21,19V5C21,3.89 20.1,3 19,3Z"/></svg>
<span class="t" style="left:1067px;top:276px;font-size:12.5px;line-height:16px;color:#1e1e1e;transform:scaleX(0.9293);">Brand</span>
<svg class="i" style="left:1160.1px;top:272.1px;width:24px;height:24px;" viewBox="0 0 24 24"><path fill="#522651" d="M10,17L5,12L6.41,10.58L10,14.17L17.59,6.58L19,8M19,3H5C3.89,3 3,3.89 3,5V19A2,2 0 0,0 5,21H19A2,2 0 0,0 21,19V5C21,3.89 20.1,3 19,3Z"/></svg>
<span class="t" style="left:1067px;top:299px;font-size:12.5px;line-height:16px;color:#1e1e1e;transform:scaleX(0.9461);">Category</span>
<svg class="i" style="left:1160.1px;top:295.1px;width:24px;height:24px;" viewBox="0 0 24 24"><path fill="#522651" d="M10,17L5,12L6.41,10.58L10,14.17L17.59,6.58L19,8M19,3H5C3.89,3 3,3.89 3,5V19A2,2 0 0,0 5,21H19A2,2 0 0,0 21,19V5C21,3.89 20.1,3 19,3Z"/></svg>
<span class="t" style="left:1067px;top:322px;font-size:12.5px;line-height:16px;color:#1e1e1e;transform:scaleX(0.9697);">Original Qty</span>
<svg class="i" style="left:1160.1px;top:318.1px;width:24px;height:24px;" viewBox="0 0 24 24"><path fill="#522651" d="M10,17L5,12L6.41,10.58L10,14.17L17.59,6.58L19,8M19,3H5C3.89,3 3,3.89 3,5V19A2,2 0 0,0 5,21H19A2,2 0 0,0 21,19V5C21,3.89 20.1,3 19,3Z"/></svg>
<span class="t" style="left:1067px;top:345px;font-size:12.5px;line-height:16px;color:#1e1e1e;transform:scaleX(0.9298);">In Stock</span>
<svg class="i" style="left:1160.1px;top:341.1px;width:24px;height:24px;" viewBox="0 0 24 24"><path fill="#522651" d="M10,17L5,12L6.41,10.58L10,14.17L17.59,6.58L19,8M19,3H5C3.89,3 3,3.89 3,5V19A2,2 0 0,0 5,21H19A2,2 0 0,0 21,19V5C21,3.89 20.1,3 19,3Z"/></svg>
<span class="t" style="left:1067px;top:368px;font-size:12.5px;line-height:16px;color:#1e1e1e;transform:scaleX(0.9686);">Incoming PO</span>
<svg class="i" style="left:1160.1px;top:364.1px;width:24px;height:24px;" viewBox="0 0 24 24"><path fill="#522651" d="M19,3H5C3.89,3 3,3.89 3,5V19A2,2 0 0,0 5,21H19A2,2 0 0,0 21,19V5C21,3.89 20.1,3 19,3M19,5V19H5V5H19Z"/></svg>
<span class="t" style="left:1067px;top:391px;font-size:12.5px;line-height:16px;color:#1e1e1e;transform:scaleX(0.9295);">Qty Per Carton</span>
<svg class="i" style="left:1160.1px;top:387.1px;width:24px;height:24px;" viewBox="0 0 24 24"><path fill="#522651" d="M10,17L5,12L6.41,10.58L10,14.17L17.59,6.58L19,8M19,3H5C3.89,3 3,3.89 3,5V19A2,2 0 0,0 5,21H19A2,2 0 0,0 21,19V5C21,3.89 20.1,3 19,3Z"/></svg>
<span class="t" style="left:1067px;top:414px;font-size:12.5px;line-height:16px;color:#1e1e1e;transform:scaleX(0.9669);">Num. of Cartons</span>
<svg class="i" style="left:1160.1px;top:410.1px;width:24px;height:24px;" viewBox="0 0 24 24"><path fill="#522651" d="M10,17L5,12L6.41,10.58L10,14.17L17.59,6.58L19,8M19,3H5C3.89,3 3,3.89 3,5V19A2,2 0 0,0 5,21H19A2,2 0 0,0 21,19V5C21,3.89 20.1,3 19,3Z"/></svg>
<span class="t" style="left:1067px;top:437px;font-size:12.5px;line-height:16px;color:#1e1e1e;transform:scaleX(0.903);">Status</span>
<svg class="i" style="left:1160.1px;top:433.1px;width:24px;height:24px;" viewBox="0 0 24 24"><path fill="#522651" d="M10,17L5,12L6.41,10.58L10,14.17L17.59,6.58L19,8M19,3H5C3.89,3 3,3.89 3,5V19A2,2 0 0,0 5,21H19A2,2 0 0,0 21,19V5C21,3.89 20.1,3 19,3Z"/></svg>
<span class="t" style="left:1067px;top:460px;font-size:12.5px;line-height:16px;color:#1e1e1e;transform:scaleX(0.9446);">Channel</span>
<svg class="i" style="left:1160.1px;top:456.1px;width:24px;height:24px;" viewBox="0 0 24 24"><path fill="#522651" d="M10,17L5,12L6.41,10.58L10,14.17L17.59,6.58L19,8M19,3H5C3.89,3 3,3.89 3,5V19A2,2 0 0,0 5,21H19A2,2 0 0,0 21,19V5C21,3.89 20.1,3 19,3Z"/></svg>
<span class="t" style="left:1067px;top:483px;font-size:12.5px;line-height:16px;color:#1e1e1e;transform:scaleX(0.845);">Tasks</span>
<svg class="i" style="left:1160.1px;top:479.1px;width:24px;height:24px;" viewBox="0 0 24 24"><path fill="#522651" d="M10,17L5,12L6.41,10.58L10,14.17L17.59,6.58L19,8M19,3H5C3.89,3 3,3.89 3,5V19A2,2 0 0,0 5,21H19A2,2 0 0,0 21,19V5C21,3.89 20.1,3 19,3Z"/></svg>
<div class="b" style="left:0px;top:728px;width:1365px;height:2px;background:#46373a;"></div>
<div class="b" style="left:195px;top:728px;width:48px;height:2px;background:#b9692c;"></div>
<div class="b" style="left:292px;top:728px;width:49px;height:2px;background:#75676b;"></div>
<div class="b" style="left:488px;top:728px;width:49px;height:2px;background:#b9692c;"></div>
</body></html>
